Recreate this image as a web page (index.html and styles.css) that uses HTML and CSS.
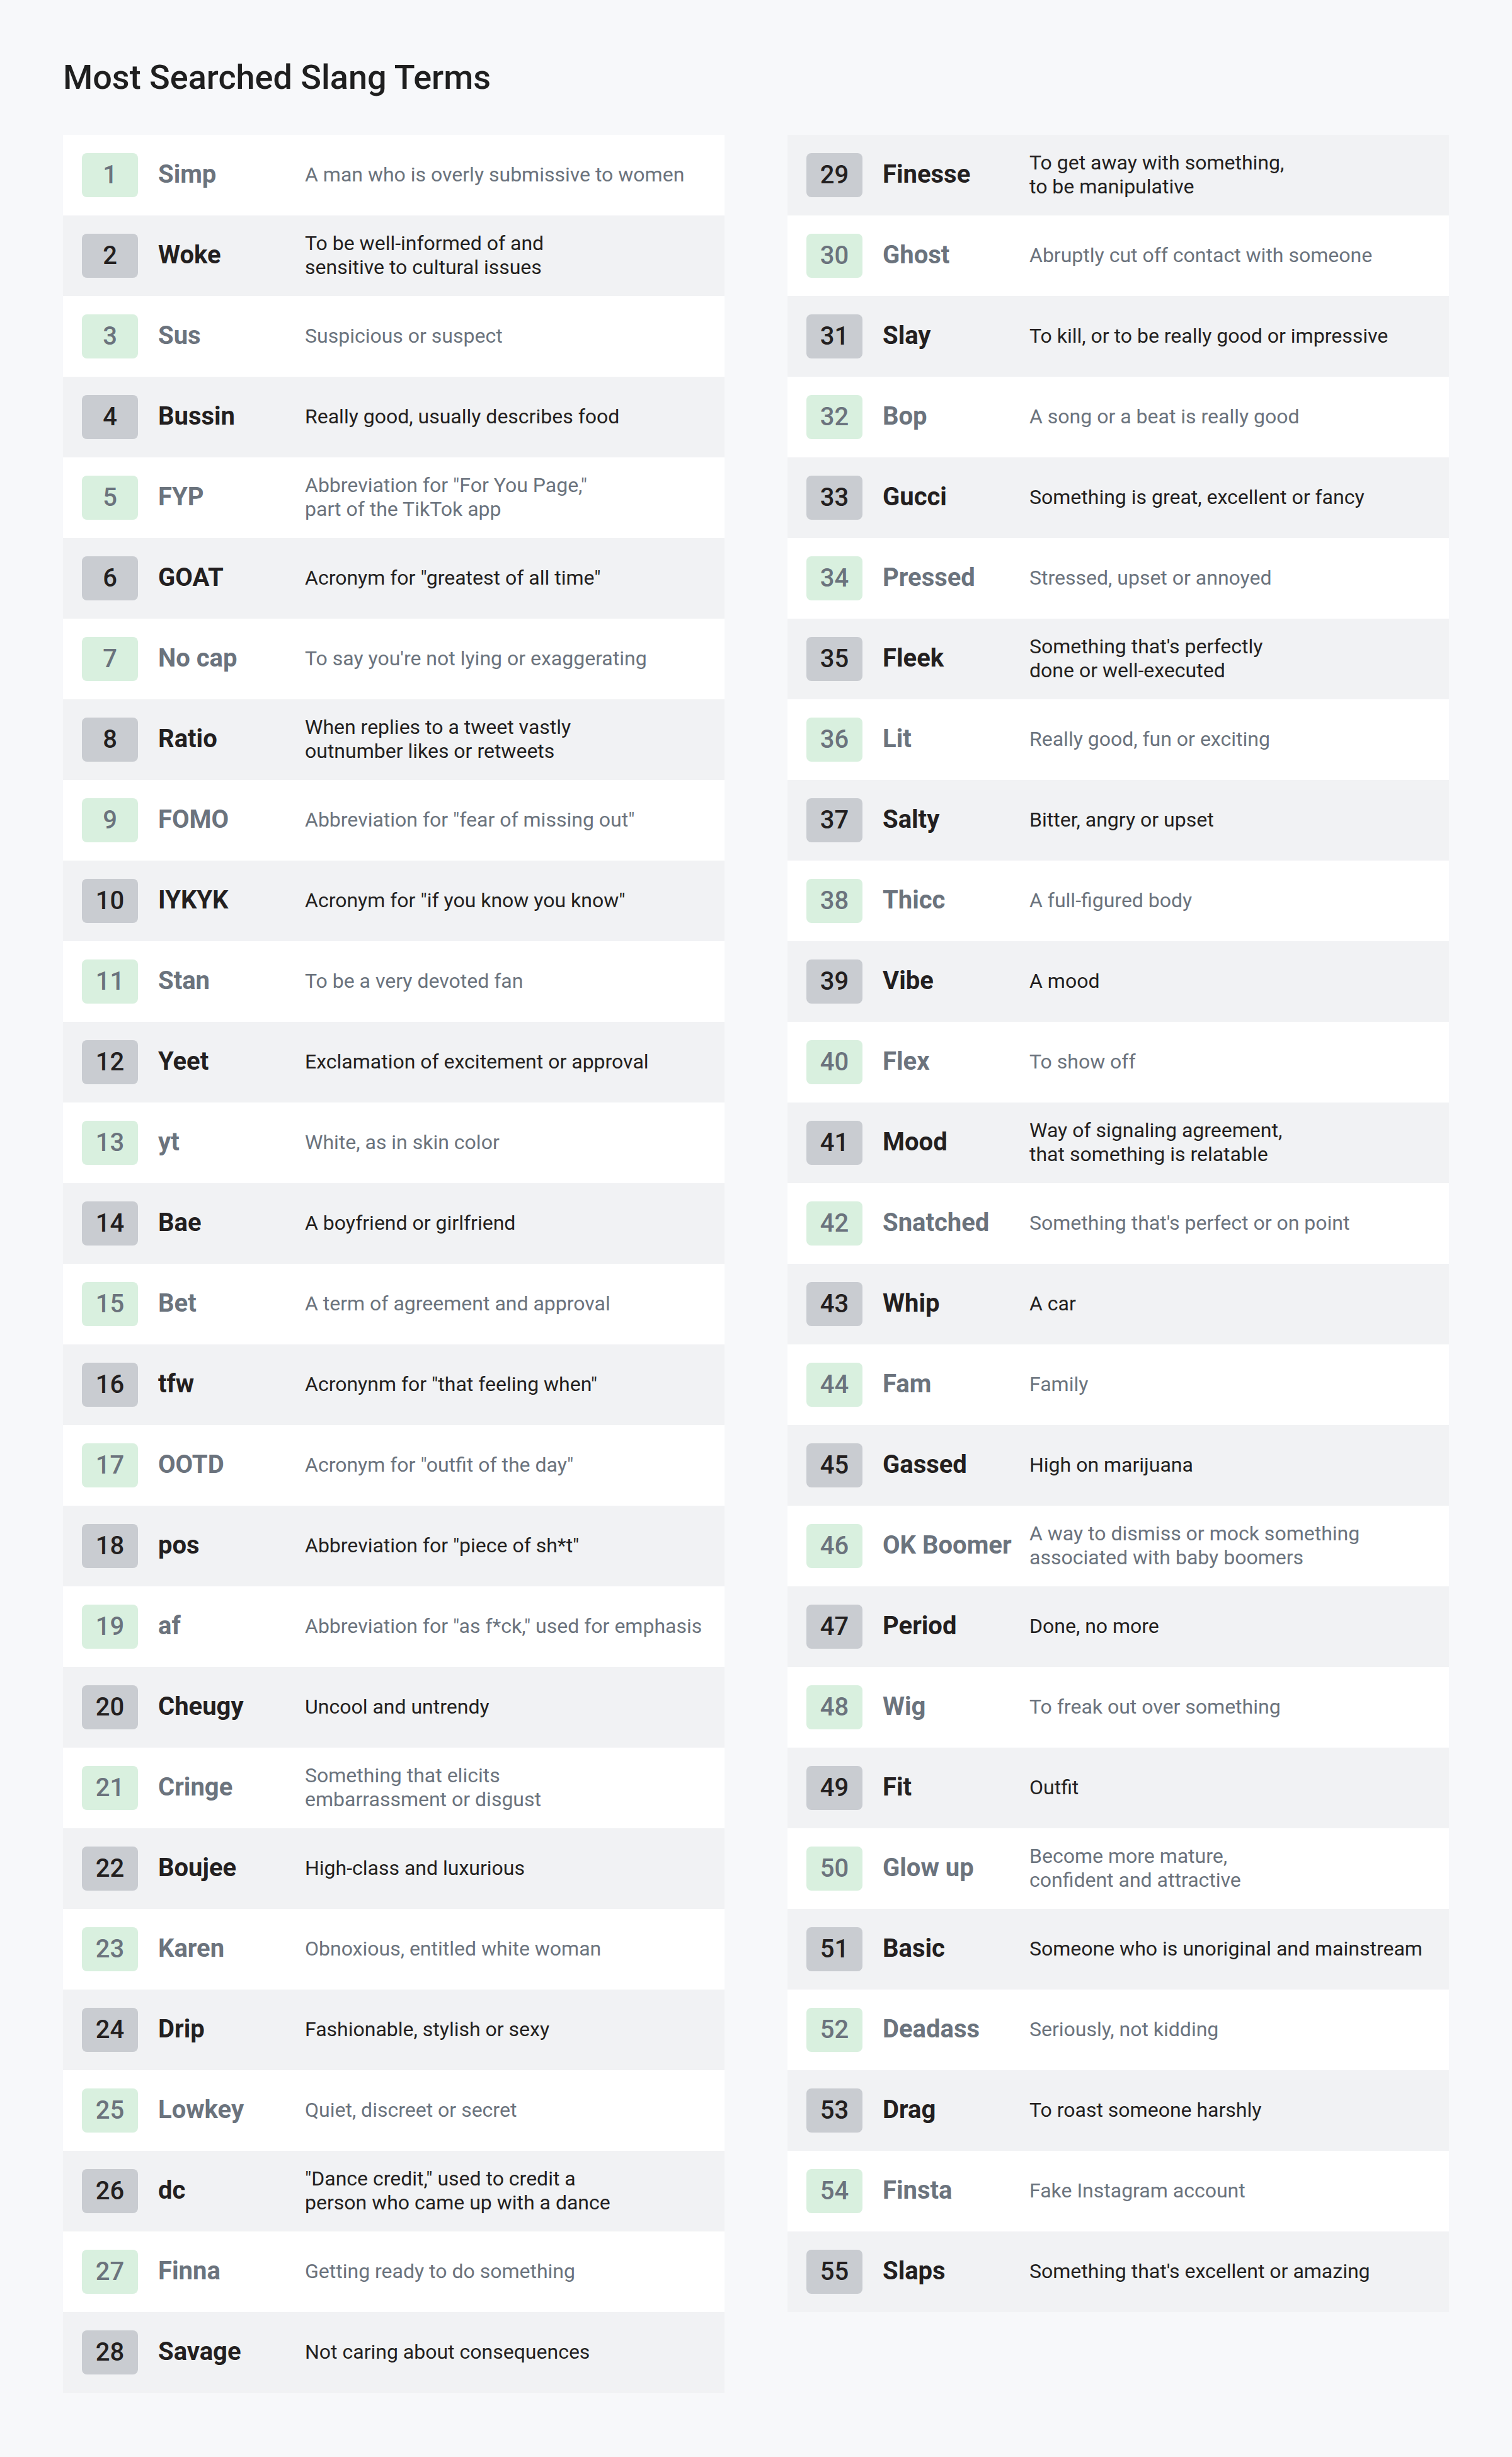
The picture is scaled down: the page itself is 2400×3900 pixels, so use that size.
FILE: index.html
```html
<!DOCTYPE html>
<html lang="en">
<head>
<meta charset="utf-8">
<title>Most Searched Slang Terms</title>
<link rel="stylesheet" href="styles.css">
</head>
<body>
<main class="page">
  <h1 class="title">Most Searched Slang Terms</h1>
  <div class="columns">
    <div class="list">
      <div class="row light"><span class="rank">1</span><span class="term">Simp</span><span class="desc">A man who is overly submissive to women</span></div>
      <div class="row dark"><span class="rank">2</span><span class="term">Woke</span><span class="desc">To be well-informed of and<br>sensitive to cultural issues</span></div>
      <div class="row light"><span class="rank">3</span><span class="term">Sus</span><span class="desc">Suspicious or suspect</span></div>
      <div class="row dark"><span class="rank">4</span><span class="term">Bussin</span><span class="desc">Really good, usually describes food</span></div>
      <div class="row light"><span class="rank">5</span><span class="term">FYP</span><span class="desc">Abbreviation for "For You Page,"<br>part of the TikTok app</span></div>
      <div class="row dark"><span class="rank">6</span><span class="term">GOAT</span><span class="desc">Acronym for "greatest of all time"</span></div>
      <div class="row light"><span class="rank">7</span><span class="term">No cap</span><span class="desc">To say you're not lying or exaggerating</span></div>
      <div class="row dark"><span class="rank">8</span><span class="term">Ratio</span><span class="desc">When replies to a tweet vastly<br>outnumber likes or retweets</span></div>
      <div class="row light"><span class="rank">9</span><span class="term">FOMO</span><span class="desc">Abbreviation for "fear of missing out"</span></div>
      <div class="row dark"><span class="rank">10</span><span class="term">IYKYK</span><span class="desc">Acronym for "if you know you know"</span></div>
      <div class="row light"><span class="rank">11</span><span class="term">Stan</span><span class="desc">To be a very devoted fan</span></div>
      <div class="row dark"><span class="rank">12</span><span class="term">Yeet</span><span class="desc">Exclamation of excitement or approval</span></div>
      <div class="row light"><span class="rank">13</span><span class="term">yt</span><span class="desc">White, as in skin color</span></div>
      <div class="row dark"><span class="rank">14</span><span class="term">Bae</span><span class="desc">A boyfriend or girlfriend</span></div>
      <div class="row light"><span class="rank">15</span><span class="term">Bet</span><span class="desc">A term of agreement and approval</span></div>
      <div class="row dark"><span class="rank">16</span><span class="term">tfw</span><span class="desc">Acronynm for "that feeling when"</span></div>
      <div class="row light"><span class="rank">17</span><span class="term">OOTD</span><span class="desc">Acronym for "outfit of the day"</span></div>
      <div class="row dark"><span class="rank">18</span><span class="term">pos</span><span class="desc">Abbreviation for "piece of sh*t"</span></div>
      <div class="row light"><span class="rank">19</span><span class="term">af</span><span class="desc">Abbreviation for "as f*ck," used for emphasis</span></div>
      <div class="row dark"><span class="rank">20</span><span class="term">Cheugy</span><span class="desc">Uncool and untrendy</span></div>
      <div class="row light"><span class="rank">21</span><span class="term">Cringe</span><span class="desc">Something that elicits<br>embarrassment or disgust</span></div>
      <div class="row dark"><span class="rank">22</span><span class="term">Boujee</span><span class="desc">High-class and luxurious</span></div>
      <div class="row light"><span class="rank">23</span><span class="term">Karen</span><span class="desc">Obnoxious, entitled white woman</span></div>
      <div class="row dark"><span class="rank">24</span><span class="term">Drip</span><span class="desc">Fashionable, stylish or sexy</span></div>
      <div class="row light"><span class="rank">25</span><span class="term">Lowkey</span><span class="desc">Quiet, discreet or secret</span></div>
      <div class="row dark"><span class="rank">26</span><span class="term">dc</span><span class="desc">"Dance credit," used to credit a<br>person who came up with a dance</span></div>
      <div class="row light"><span class="rank">27</span><span class="term">Finna</span><span class="desc">Getting ready to do something</span></div>
      <div class="row dark"><span class="rank">28</span><span class="term">Savage</span><span class="desc">Not caring about consequences</span></div>
    </div>
    <div class="list">
      <div class="row dark"><span class="rank">29</span><span class="term">Finesse</span><span class="desc">To get away with something,<br>to be manipulative</span></div>
      <div class="row light"><span class="rank">30</span><span class="term">Ghost</span><span class="desc">Abruptly cut off contact with someone</span></div>
      <div class="row dark"><span class="rank">31</span><span class="term">Slay</span><span class="desc">To kill, or to be really good or impressive</span></div>
      <div class="row light"><span class="rank">32</span><span class="term">Bop</span><span class="desc">A song or a beat is really good</span></div>
      <div class="row dark"><span class="rank">33</span><span class="term">Gucci</span><span class="desc">Something is great, excellent or fancy</span></div>
      <div class="row light"><span class="rank">34</span><span class="term">Pressed</span><span class="desc">Stressed, upset or annoyed</span></div>
      <div class="row dark"><span class="rank">35</span><span class="term">Fleek</span><span class="desc">Something that's perfectly<br>done or well-executed</span></div>
      <div class="row light"><span class="rank">36</span><span class="term">Lit</span><span class="desc">Really good, fun or exciting</span></div>
      <div class="row dark"><span class="rank">37</span><span class="term">Salty</span><span class="desc">Bitter, angry or upset</span></div>
      <div class="row light"><span class="rank">38</span><span class="term">Thicc</span><span class="desc">A full-figured body</span></div>
      <div class="row dark"><span class="rank">39</span><span class="term">Vibe</span><span class="desc">A mood</span></div>
      <div class="row light"><span class="rank">40</span><span class="term">Flex</span><span class="desc">To show off</span></div>
      <div class="row dark"><span class="rank">41</span><span class="term">Mood</span><span class="desc">Way of signaling agreement,<br>that something is relatable</span></div>
      <div class="row light"><span class="rank">42</span><span class="term">Snatched</span><span class="desc">Something that's perfect or on point</span></div>
      <div class="row dark"><span class="rank">43</span><span class="term">Whip</span><span class="desc">A car</span></div>
      <div class="row light"><span class="rank">44</span><span class="term">Fam</span><span class="desc">Family</span></div>
      <div class="row dark"><span class="rank">45</span><span class="term">Gassed</span><span class="desc">High on marijuana</span></div>
      <div class="row light"><span class="rank">46</span><span class="term">OK Boomer</span><span class="desc">A way to dismiss or mock something<br>associated with baby boomers</span></div>
      <div class="row dark"><span class="rank">47</span><span class="term">Period</span><span class="desc">Done, no more</span></div>
      <div class="row light"><span class="rank">48</span><span class="term">Wig</span><span class="desc">To freak out over something</span></div>
      <div class="row dark"><span class="rank">49</span><span class="term">Fit</span><span class="desc">Outfit</span></div>
      <div class="row light"><span class="rank">50</span><span class="term">Glow up</span><span class="desc">Become more mature,<br>confident and attractive</span></div>
      <div class="row dark"><span class="rank">51</span><span class="term">Basic</span><span class="desc">Someone who is unoriginal and mainstream</span></div>
      <div class="row light"><span class="rank">52</span><span class="term">Deadass</span><span class="desc">Seriously, not kidding</span></div>
      <div class="row dark"><span class="rank">53</span><span class="term">Drag</span><span class="desc">To roast someone harshly</span></div>
      <div class="row light"><span class="rank">54</span><span class="term">Finsta</span><span class="desc">Fake Instagram account</span></div>
      <div class="row dark"><span class="rank">55</span><span class="term">Slaps</span><span class="desc">Something that's excellent or amazing</span></div>
    </div>
  </div>
</main>
</body>
</html>
```

FILE: styles.css
```css
html {
  background: #f7f8fa;
}

body {
  margin: 0;
  background: #f7f8fa;
  font-family: Roboto, "Liberation Sans", Arial, sans-serif;
  color: #222222;
}

.page {
  box-sizing: border-box;
  min-height: 3900px;
  padding: 96px 100px 100px;
}

.title {
  margin: 0 0 64px;
  font-size: 54px;
  line-height: 54px;
  font-weight: 500;
  color: #1f1f1f;
}

.columns {
  display: grid;
  grid-template-columns: 1050px 1050px;
  column-gap: 100px;
  align-items: start;
}

.list {
  display: flex;
  flex-direction: column;
}

.row {
  display: flex;
  align-items: center;
  height: 128px;
  padding-left: 30px;
  box-sizing: border-box;
}

.rank {
  flex: 0 0 auto;
  box-sizing: border-box;
  width: 89px;
  height: 70px;
  padding-bottom: 2px;
  border-radius: 8px;
  display: flex;
  align-items: center;
  justify-content: center;
  font-size: 40px;
  font-weight: 500;
  margin-right: 32px;
}

.term {
  flex: 0 0 233px;
  padding-bottom: 4px;
  font-size: 40px;
  font-weight: 700;
  white-space: nowrap;
}

.desc {
  padding-bottom: 3px;
  font-size: 32px;
  line-height: 38px;
  font-weight: 400;
}

.light {
  background: #ffffff;
  color: #6b737d;
}

.light .rank {
  background: #d9f0df;
}

.dark {
  background: #f1f2f4;
  color: #231f20;
}

.dark .rank {
  background: #c9ccd1;
}
```
